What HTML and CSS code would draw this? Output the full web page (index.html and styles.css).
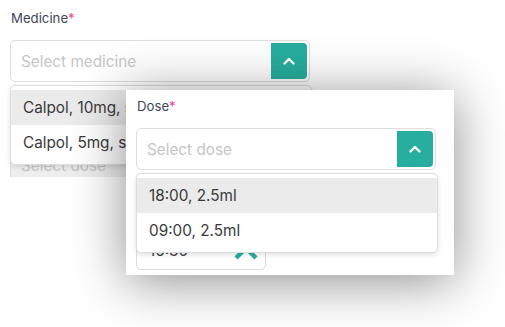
FILE: index.html
```html
<!DOCTYPE html>
<html lang="en">
<head>
  <meta charset="UTF-8">
  <meta name="viewport" content="width=device-width, initial-scale=1.0">
  <title>Medication form</title>
  <link rel="stylesheet" href="styles.css">
</head>
<body>
  <div class="page">
    <div class="back-panel">
      <div class="field">
        <label class="field-label">Medicine<span class="req">*</span></label>
        <div class="select">
          <span class="placeholder">Select medicine</span>
          <span class="select-btn">
            <svg width="12" height="8" viewBox="0 0 12 8"><polyline points="1.5,6.5 6,2 10.5,6.5" fill="none" stroke="#fff" stroke-width="2.4" stroke-linecap="round" stroke-linejoin="round"/></svg>
          </span>
        </div>
        <ul class="options options-medicine">
          <li class="option active">Calpol, 10mg, syrup</li>
          <li class="option">Calpol, 5mg, syrup</li>
        </ul>
      </div>
      <div class="field field-hidden-label">
        <div class="select disabled">
          <span class="placeholder">Select dose</span>
        </div>
      </div>
    </div>

    <div class="card">
      <div class="field">
        <label class="field-label">Dose<span class="req">*</span></label>
        <div class="select">
          <span class="placeholder">Select dose</span>
          <span class="select-btn">
            <svg width="12" height="8" viewBox="0 0 12 8"><polyline points="1.5,6.5 6,2 10.5,6.5" fill="none" stroke="#fff" stroke-width="2.4" stroke-linecap="round" stroke-linejoin="round"/></svg>
          </span>
        </div>
        <ul class="options options-dose">
          <li class="option active">18:00, 2.5ml</li>
          <li class="option">09:00, 2.5ml</li>
        </ul>
      </div>
      <div class="field">
        <label class="field-label">Time<span class="req">*</span></label>
        <div class="time-input">
          <span class="time-value">16:30</span>
          <svg class="time-chevron" width="26" height="18" viewBox="0 0 26 18"><polyline points="3,15 13,5 23,15" fill="none" stroke="#27ae9e" stroke-width="4.5" stroke-linejoin="miter"/></svg>
        </div>
      </div>
    </div>
  </div>
</body>
</html>
```

FILE: styles.css
```css
* {
  box-sizing: border-box;
}
body {
  margin: 0;
  background: #fff;
  font-family: 'Inter', 'Noto Sans', sans-serif;
  color: #333;
  overflow: hidden;
}
.page {
  position: relative;
  width: 505px;
  height: 327px;
}
.back-panel {
  width: 340px;
  height: 177px;
  overflow: hidden;
  padding: 8px 0 0 10px;
  background: #fff;
}
.field {
  position: relative;
}
.field-label {
  display: block;
  font-size: 13.2px;
  line-height: 20px;
  color: #3c4858;
  padding-left: 1px;
  margin-bottom: 12px;
}
.req {
  color: #e8408f;
}
.select {
  position: relative;
  display: flex;
  align-items: center;
  width: 300px;
  height: 42px;
  border: 1px solid #ddd;
  border-radius: 5px;
  padding: 0 2px 0 10px;
  background: #fff;
}
.select.disabled {
  background: #eee;
}
.placeholder {
  flex: 1;
  font-size: 15.3px;
  color: #c6c6c6;
}
.select-btn {
  display: flex;
  align-items: center;
  justify-content: center;
  width: 36px;
  height: 36px;
  background: #27ae9e;
  border-radius: 0 4px 4px 0;
}
.back-panel .field-hidden-label {
  margin-top: 62px;
}
.options {
  position: absolute;
  z-index: 2;
  left: 0;
  top: 77px;
  width: 302px;
  margin: 0;
  padding: 4px 0;
  list-style: none;
  background: #fff;
  border: 1px solid #ddd;
  border-radius: 5px;
  box-shadow: 0 2px 5px rgba(0,0,0,0.12);
}
.option {
  height: 35px;
  line-height: 35px;
  padding-left: 12px;
  font-size: 15.3px;
  color: #3a3a3a;
  white-space: nowrap;
  overflow: hidden;
}
.option.active {
  background: #ebebeb;
}

.card {
  position: absolute;
  z-index: 5;
  left: 126px;
  top: 90px;
  width: 328px;
  height: 185px;
  padding: 6px 10px 0;
  background: #fff;
  box-shadow: 0 6px 50px rgba(0,0,0,0.45);
}
.card .field + .field {
  margin-top: 28px;
}
.time-input {
  display: flex;
  align-items: center;
  justify-content: space-between;
  width: 130px;
  height: 40px;
  border: 1px solid #ddd;
  border-radius: 5px;
  padding: 0 6px 0 12px;
}
.time-value {
  font-size: 15.3px;
  color: #3a3a3a;
}
.time-chevron {
  margin-top: 4px;
}
```
